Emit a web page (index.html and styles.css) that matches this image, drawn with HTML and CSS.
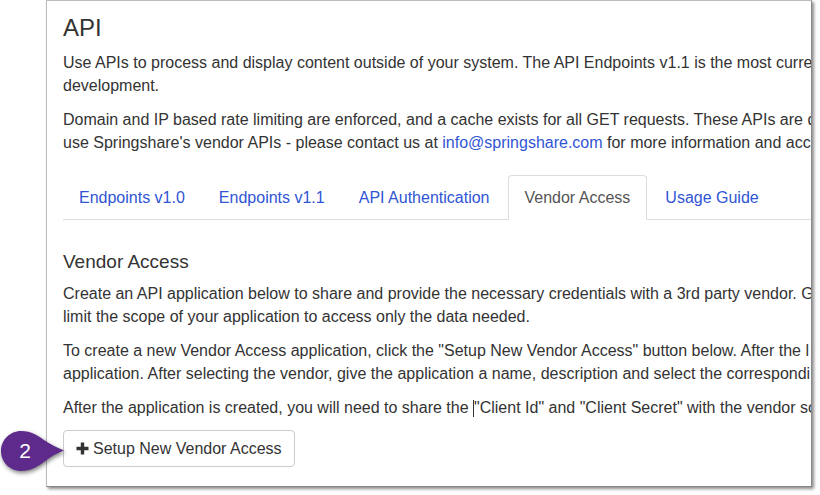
FILE: index.html
```html
<!DOCTYPE html>
<html lang="en">
<head>
  <meta charset="UTF-8">
  <title>API</title>
  <link rel="stylesheet" href="styles.css">
</head>
<body>
  <div class="window">
    <h1>API</h1>
    <p class="line">Use APIs to process and display content outside of your system. The API Endpoints v1.1 is the most curre</p>
    <p class="line last">development.</p>
    <p class="line">Domain and IP based rate limiting are enforced, and a cache exists for all GET requests. These APIs are d</p>
    <p class="line last">use Springshare's vendor APIs - please contact us at <a href="#">info@springshare.com</a> for more information and acc</p>

    <ul class="tabs">
      <li><a href="#">Endpoints v1.0</a></li>
      <li><a href="#">Endpoints v1.1</a></li>
      <li><a href="#">API Authentication</a></li>
      <li class="active"><a href="#">Vendor Access</a></li>
      <li><a href="#">Usage Guide</a></li>
    </ul>

    <h2>Vendor Access</h2>
    <p class="line">Create an API application below to share and provide the necessary credentials with a 3rd party vendor. G</p>
    <p class="line last">limit the scope of your application to access only the data needed.</p>
    <p class="line">To create a new Vendor Access application, click the "Setup New Vendor Access" button below. After the l</p>
    <p class="line last">application. After selecting the vendor, give the application a name, description and select the correspondi</p>
    <p class="line last">After the application is created, you will need to share the <span class="caret"></span>"Client Id" and "Client Secret" with the vendor so</p>

    <button class="setup-btn" type="button">
      <svg class="plus" viewBox="0 0 13 13" width="13" height="13"><path d="M4.8 0.5h3.4v4.3h4.3v3.4h-4.3v4.3h-3.4v-4.3h-4.3v-3.4h4.3z"/></svg>
      Setup New Vendor Access
    </button>
  </div>

  <!-- Step marker over the window corner -->
  <div class="step">
    <svg class="step-shape" viewBox="0 0 63 40" width="63" height="40"><path d="M20 0C30 0 38 5 43 9C49 13 56 17 63 19.500C56 22 49 26 43 31C38 35 30 40 20 40C9 40 0 31 0 20C0 9 9 0 20 0z"/></svg>
    <span class="step-num">2</span>
  </div>
</body>
</html>
```

FILE: styles.css
```css
/* Basic page styles */
html, body {
  margin: 0;
  padding: 0;
  height: 495px;
  overflow: hidden;
  background-color: #fff;
  font-family: "Liberation Sans", Arial, sans-serif;
  color: #333;
}

body {
  padding-left: 46px;
}

/* Screenshot window, cut off on the right */
.window {
  width: 766px;
  height: 487px;
  box-sizing: border-box;
  padding: 14px 0 0 16px;
  background-color: #fff;
  border: 1px solid #bbb;
  border-right-color: #888;
  border-bottom-color: #888;
  box-shadow: 2px 2px 3px rgba(0, 0, 0, 0.45);
  overflow: hidden;
}

h1 {
  margin: 0 0 10px;
  font-size: 24px;
  line-height: 26px;
  font-weight: 400;
}

h2 {
  margin: 0 0 10px;
  font-size: 19px;
  line-height: 21px;
  font-weight: 400;
}

.line {
  margin: 0;
  font-size: 16px;
  line-height: 23px;
  white-space: nowrap;
}

.line.last {
  margin-bottom: 11px;
}

a {
  color: #2f55d4;
  text-decoration: none;
}

/* Tabs */
.tabs {
  display: flex;
  margin: 21px 0 31px;
  padding: 0;
  list-style: none;
  border-bottom: 1px solid #ddd;
}

.tabs li {
  margin-right: 2px;
  margin-bottom: -1px;
}

.tabs .active {
  margin-left: 1px;
}

.tabs a {
  display: block;
  padding: 10px 15px;
  font-size: 16px;
  line-height: 23px;
  border: 1px solid transparent;
  border-radius: 4px 4px 0 0;
}

.tabs .active a {
  padding-right: 16px;
  color: #555;
  background-color: #fff;
  border-color: #ddd #ddd #fff;
}

.caret {
  display: inline-block;
  width: 1px;
  height: 17px;
  margin-bottom: -4px;
  background-color: #333;
}

/* Button */
.setup-btn {
  display: flex;
  align-items: center;
  gap: 4px;
  height: 37px;
  padding: 0 12px;
  box-sizing: border-box;
  font-family: inherit;
  font-size: 16px;
  color: #333;
  background-color: #fff;
  border: 1px solid #ccc;
  border-radius: 4px;
}

.plus {
  fill: #333;
}

/* Step marker */
.step {
  position: absolute;
  left: 1px;
  top: 431px;
  width: 63px;
  height: 40px;
}

.step-shape {
  display: block;
  fill: #5e2a8c;
  filter: drop-shadow(1px 2px 2px rgba(0, 0, 0, 0.5));
}

.step-num {
  position: absolute;
  left: 0;
  top: 0;
  width: 48px;
  font-size: 21px;
  line-height: 40px;
  text-align: center;
  color: #fff;
}
```
